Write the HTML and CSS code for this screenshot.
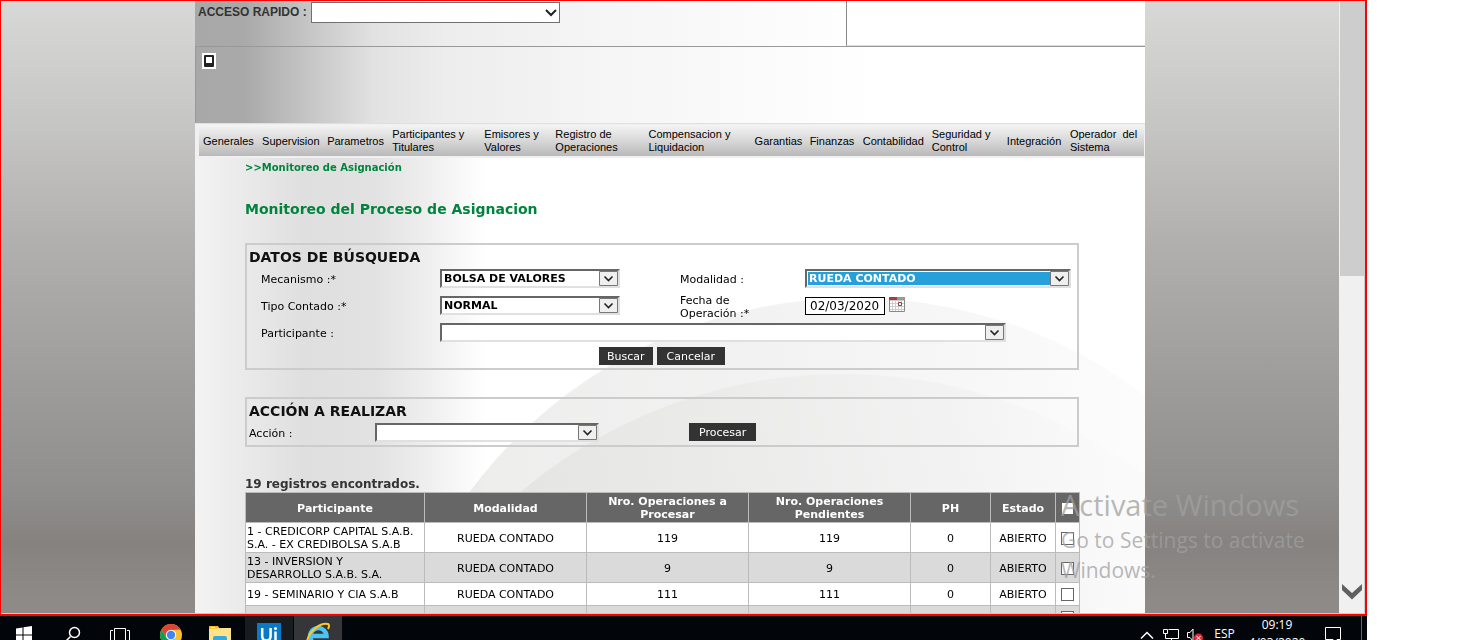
FILE: index.html
```html
<!DOCTYPE html>
<html lang="es">
<head>
<meta charset="utf-8">
<title>Monitoreo del Proceso de Asignacion</title>
<link rel="stylesheet" href="styles.css">
</head>
<body>
<div class="screen">
  <div class="frame">
    <div class="page">
      <div class="site">
        <header class="header">
          <div class="quick">
            <div class="quick-form">
              <label for="quick">ACCESO RAPIDO :</label>
              <span class="quick-box">
                <select id="quick"><option></option></select>
                <svg class="quick-arrow" viewBox="0 0 12 8"><path d="M1 1l5 5 5-5" fill="none" stroke="#222" stroke-width="2"/></svg>
              </span>
            </div>
            <div class="quick-logo"></div>
          </div>
          <div class="banner">
            <svg class="banner-icon" viewBox="0 0 14 16"><path fill="#fff" d="M0 0h14v16H0z"/><rect x="2" y="2" width="10" height="12" rx="1" fill="#222"/><path fill="#fff" d="M4 4h6v6H4z"/></svg>
          </div>
        </header>
        <nav class="nav">
          <div class="nav-bar">
            <a href="#">Generales</a>
            <a href="#">Supervision</a>
            <a href="#">Parametros</a>
            <a href="#">Participantes y<br>Titulares</a>
            <a href="#">Emisores y<br>Valores</a>
            <a href="#">Registro de<br>Operaciones</a>
            <a href="#">Compensacion y<br>Liquidacion</a>
            <a href="#">Garantias</a>
            <a href="#">Finanzas</a>
            <a href="#">Contabilidad</a>
            <a href="#">Seguridad y<br>Control</a>
            <a href="#">Integración</a>
            <a href="#">Operador&nbsp; del<br>Sistema</a>
          </div>
        </nav>
        <main class="content">
          <svg class="backdrop" viewBox="0 0 950 456">
            <defs>
              <linearGradient id="outer" gradientUnits="userSpaceOnUse" x1="250" y1="0" x2="950" y2="0">
                <stop offset="0" stop-color="#ededec"/><stop offset=".45" stop-color="#f2f2f2"/><stop offset="1" stop-color="#fcfcfc"/>
              </linearGradient>
              <linearGradient id="inner" gradientUnits="userSpaceOnUse" x1="250" y1="456" x2="920" y2="330">
                <stop offset="0" stop-color="#e2e2e1"/><stop offset=".4" stop-color="#eaeae9"/><stop offset=".8" stop-color="#f3f3f3"/><stop offset="1" stop-color="#fafafa"/>
              </linearGradient>
            </defs>
            <circle cx="660" cy="620" r="480" fill="url(#outer)"/>
            <circle cx="648" cy="716" r="500" fill="url(#inner)"/>
          </svg>
          <p class="crumb">&gt;&gt;Monitoreo de Asignación</p>
          <h1 class="title">Monitoreo del Proceso de Asignacion</h1>

          <section class="panel">
            <h2 class="panel-title">DATOS DE BÚSQUEDA</h2>
            <div class="search-grid">
              <label for="mec">Mecanismo :*</label>
              <span class="combo combo-short">
                <select id="mec"><option>BOLSA DE VALORES</option></select>
                <svg class="arrow" viewBox="0 0 19 15"><path d="M.5.5h18v14H.5z" fill="#efefef" stroke="#777"/><path d="M5.500 5.500l4 4 4-4" fill="none" stroke="#222" stroke-width="1.600"/></svg>
              </span>
              <label for="mod">Modalidad :</label>
              <span class="combo combo-mid">
                <select id="mod" class="selected"><option>RUEDA CONTADO</option></select>
                <svg class="arrow" viewBox="0 0 19 15"><path d="M.5.5h18v14H.5z" fill="#efefef" stroke="#777"/><path d="M5.500 5.500l4 4 4-4" fill="none" stroke="#222" stroke-width="1.600"/></svg>
              </span>
              <label for="tipo">Tipo Contado :*</label>
              <span class="combo combo-short">
                <select id="tipo"><option>NORMAL</option></select>
                <svg class="arrow" viewBox="0 0 19 15"><path d="M.5.5h18v14H.5z" fill="#efefef" stroke="#777"/><path d="M5.500 5.500l4 4 4-4" fill="none" stroke="#222" stroke-width="1.600"/></svg>
              </span>
              <label for="fecha">Fecha de<br>Operación :*</label>
              <span class="date">
                <input id="fecha" type="text" value="02/03/2020">
                <button type="button" class="calendar" aria-label="Calendario">
                  <svg viewBox="0 0 16 15"><path fill="#fff" d="M0 0h16v15H0z"/><path d="M1 3.500h14M1 6.500h14M1 9.500h14M1 12.500h14M3.500 3v11M6.500 3v11M9.500 3v11M12.500 3v11" stroke="#ccc"/><path fill="#a33d3d" d="M0 0h8v3H0z"/><path fill="#999" d="M8 0h8v3H8z"/><path fill="#fff" stroke="#a33d3d" d="M9.500 5.500h3v3h-3z"/><path fill="none" stroke="#888" d="M.5 3v11.500h15V3"/></svg>
                </button>
              </span>
              <label for="part">Participante :</label>
              <span class="combo combo-long">
                <select id="part"><option></option></select>
                <svg class="arrow" viewBox="0 0 19 15"><path d="M.5.5h18v14H.5z" fill="#efefef" stroke="#777"/><path d="M5.500 5.500l4 4 4-4" fill="none" stroke="#222" stroke-width="1.600"/></svg>
              </span>
            </div>
            <div class="buttons">
              <button type="button" class="btn btn-narrow">Buscar</button>
              <button type="button" class="btn">Cancelar</button>
            </div>
          </section>

          <section class="panel panel-action">
            <h2 class="panel-title">ACCIÓN A REALIZAR</h2>
            <div class="action-grid">
              <label for="accion">Acción :</label>
              <span class="combo combo-action">
                <select id="accion"><option></option></select>
                <svg class="arrow" viewBox="0 0 19 15"><path d="M.5.5h18v14H.5z" fill="#efefef" stroke="#777"/><path d="M5.500 5.500l4 4 4-4" fill="none" stroke="#222" stroke-width="1.600"/></svg>
              </span>
              <span><button type="button" class="btn">Procesar</button></span>
            </div>
          </section>

          <p class="count">19 registros encontrados.</p>
          <table class="results">
            <colgroup><col class="c-part"><col class="c-op"><col class="c-op"><col class="c-op"><col class="c-ph"><col class="c-state"><col class="c-check"></colgroup>
            <thead>
              <tr><th>Participante</th><th>Modalidad</th><th>Nro. Operaciones a Procesar</th><th>Nro. Operaciones Pendientes</th><th>PH</th><th>Estado</th><th><input type="checkbox" aria-label="Seleccionar todos"></th></tr>
            </thead>
            <tbody>
              <tr><td>1 - CREDICORP CAPITAL S.A.B. S.A. - EX CREDIBOLSA S.A.B</td><td>RUEDA CONTADO</td><td>119</td><td>119</td><td>0</td><td>ABIERTO</td><td><input type="checkbox" aria-label="Seleccionar 1"></td></tr>
              <tr><td>13 - INVERSION Y<br>DESARROLLO S.A.B. S.A.</td><td>RUEDA CONTADO</td><td>9</td><td>9</td><td>0</td><td>ABIERTO</td><td><input type="checkbox" aria-label="Seleccionar 13"></td></tr>
              <tr><td>19 - SEMINARIO Y CIA S.A.B</td><td>RUEDA CONTADO</td><td>111</td><td>111</td><td>0</td><td>ABIERTO</td><td><input type="checkbox" aria-label="Seleccionar 19"></td></tr>
              <tr><td></td><td></td><td></td><td></td><td></td><td></td><td><input type="checkbox" aria-label="Seleccionar"></td></tr>
            </tbody>
          </table>
        </main>
      </div>
    </div>
    <div class="scrollbar">
      <div class="thumb"></div>
      <svg class="scroll-down" viewBox="0 0 20 16"><path fill="#606060" d="M0 0l10 9L20 0v6L10 15.500 0 6z"/></svg>
    </div>
    <div class="watermark">
      <p class="watermark-title">Activate Windows</p>
      <p>Go to Settings to activate<br>Windows.</p>
    </div>
  </div>

  <footer class="taskbar">
    <div class="taskbar-row">
      <button type="button" class="task" aria-label="Inicio"><svg viewBox="0 0 48 36"><path fill="#fff" d="M16 12.500l6.500-1v7H16zM23.500 11.300L32 10v8.500h-8.500zM16 19.500h6.500v7l-6.500-1zM23.500 19.500H32V28l-8.500-1.200z"/></svg></button>
      <button type="button" class="task" aria-label="Buscar"><svg viewBox="0 0 48 36"><g fill="none" stroke="#fff" stroke-width="1.500"><circle cx="25.500" cy="16.500" r="5"/><path d="M21.500 20.500L16 26"/></g></svg></button>
      <button type="button" class="task" aria-label="Vista de tareas"><svg viewBox="0 0 48 36"><path fill="none" stroke="#fff" d="M16.500 12.500h11v15h-11zM15 14.500h-2.500v11H15M29 14.500h2.500v11H29"/></svg></button>
      <button type="button" class="task" aria-label="Chrome"><svg viewBox="0 0 48 36"><circle cx="24" cy="19" r="11" fill="#fbc02d"/><path fill="#db4437" d="M14.500 13.500a11 11 0 0119 0L24 14l-5 7z"/><path fill="#0f9d58" d="M14.500 13.500a11 11 0 009 16.500l5-9-9 1z"/><circle cx="24" cy="19" r="5.200" fill="#fff"/><circle cx="24" cy="19" r="4.200" fill="#4285f4"/></svg></button>
      <button type="button" class="task" aria-label="Archivos"><svg viewBox="0 0 48 36"><path fill="#f5b92a" d="M13 10h9l2 3h-11z"/><path fill="#fff3b0" d="M15 11h4v1h-4z"/><path fill="#ffe28a" d="M13 13l12-1h10v18H13z"/><path fill="#35a8dc" d="M17 22q0-2 2-2h10q2 0 2 2v10H17z"/></svg></button>
      <button type="button" class="task task-open" aria-label="UiPath"><svg viewBox="0 0 48 36"><path fill="#0a7ac8" d="M12 7h24v24H12z"/><path fill="none" stroke="#fff" stroke-width="2.500" d="M17.200 12v8q0 4.500 4.200 4.500t4.200-4.500v-8M30.500 15.500v9"/><circle cx="30.500" cy="12.500" r="1.500" fill="#fff"/></svg></button>
      <button type="button" class="task task-active" aria-label="Internet Explorer"><svg viewBox="0 0 48 36"><path fill="none" stroke="#4cc3f5" stroke-width="4.500" d="M16.500 20h16a8.200 8.200 0 10-1.500 5"/><path fill="none" stroke="#ffc91f" stroke-width="2" d="M13 25C16 14 27 6 34 8q2 1 0 5"/></svg></button>
      <div class="tray">
        <button type="button" class="tray-icon" aria-label="Mostrar iconos"><svg viewBox="0 0 24 36"><path fill="none" stroke="#fff" stroke-width="1.500" d="M9 22.500l6-6 6 6"/></svg></button>
        <button type="button" class="tray-icon" aria-label="Red"><svg viewBox="0 0 24 36"><path fill="none" stroke="#fff" d="M12.500 13.500h10v9h-13V18M15.500 23v3M12 26.500h8M7.500 13.500h4v4h-4z"/></svg></button>
        <button type="button" class="tray-icon" aria-label="Volumen"><svg viewBox="0 0 24 36"><path fill="none" stroke="#fff" d="M7.500 16.500h2.500l3-3.500v12l-3-3.500H7.500z"/><circle cx="18.500" cy="22" r="4.500" fill="#dd2c35"/><path stroke="#fff" d="M16.500 20l4 4M20.500 20l-4 4"/></svg></button>
        <button type="button" class="lang">ESP</button>
        <button type="button" class="clock">09:19<br>4/03/2020</button>
        <button type="button" class="task" aria-label="Notificaciones"><svg viewBox="0 0 48 36"><path fill="none" stroke="#fff" d="M16.500 11.500h15v12h-3.500v4l-4-4h-7.500z"/></svg></button>
      </div>
    </div>
  </footer>
</div>
</body>
</html>
```
FILE: styles.css
```css
* { box-sizing: border-box; }
body { margin: 0; background: #fff; color: #000; font: 11px/13px "DejaVu Sans", Verdana, sans-serif; }
p, h1, h2 { margin: 0; }
button { padding: 0; border: 0; background: none; font: inherit; color: inherit; }
svg { display: block; }

.screen { display: flex; flex-direction: column; height: 100vh; margin-right: 99px; overflow: hidden; }
.frame { position: relative; flex: 1; min-height: 0; display: flex; border: solid red; border-width: 1px 2px 2px 1px; overflow: hidden; }
.page {
  flex: 1; overflow: hidden; border-bottom: 1px solid #c8c8c8;
  background: linear-gradient(#d8d8d6 0, #c6c6c4 120px, #b2b0af 240px, #9f9e9c 370px, #8f8e8c 490px, #868280 540px, #8e8a88 600px);
}
.site { width: 100%; max-width: 950px; min-height: 100%; margin: 0 auto; background: #fff; }

.header { background: linear-gradient(90deg, #a8a8a8 0, #a9a9a9 50px, #c4c4c4 110px, #e2e2e2 180px, #ededed 250px, #f5f5f5 400px, #fff 680px); }
.quick { display: flex; height: 46px; border-bottom: 1px solid #999; }
.quick-form { flex: 1; display: flex; align-items: flex-start; gap: 4px; padding-left: 3px; }
.quick-form label { font: bold 12px/22px "Liberation Sans", Arial, sans-serif; color: #333; }
.quick-box { position: relative; width: 249px; margin-top: 1px; }
.quick-box select { appearance: none; display: block; width: 100%; height: 21px; border: 1px solid #707070; border-radius: 0; background: #fff; }
.quick-arrow { position: absolute; right: 3px; top: 7px; width: 12px; height: 8px; pointer-events: none; }
.quick-logo { width: 299px; border-left: 1px solid #888; border-bottom: 1px solid #ddd; background: #fff; }
.banner { height: 76px; padding: 6px; border-left: 1px solid #999; }
.banner-icon { width: 14px; height: 16px; }

.nav { padding: 1px 1px 2px 4px; border-top: 1px solid #e0e0e0; background: #f0f0f0; }
.nav-bar {
  display: grid; grid-template-columns: 59fr 65fr 65fr 92fr 71fr 93fr 106fr 55fr 53fr 69fr 75fr 63fr 74fr;
  align-items: center; height: 31px; padding: 1px 0 0 4px; background: linear-gradient(#f4f4f4, #d8d8d8 50%, #b9b9b9);
  font: 11px/13px "Liberation Sans", Arial, sans-serif;
}
.nav-bar a { color: #000; text-decoration: none; white-space: nowrap; }

.content { position: relative; z-index: 0; min-height: 456px; padding: 4px 66px 0 50px; background: linear-gradient(90deg, #f3f3f3 0, #dfdfdf 110px, #e2e2e2 180px, #eee 230px, #fff 290px); overflow: hidden; }
.backdrop { position: absolute; z-index: -1; left: 0; top: 0; width: 950px; height: 456px; mix-blend-mode: multiply; }
.crumb { font-weight: bold; font-size: 10px; line-height: 12px; color: #00843d; }
.title { margin-top: 26px; font-size: 14px; line-height: 18px; color: #00843d; }

.panel { margin-top: 25px; padding: 5px 0 3px; border: 2px solid #ccc; }
.panel-action { margin-top: 27px; padding-bottom: 0; }
.panel-title { padding-left: 2px; font-size: 14px; line-height: 15px; color: #111; }
.search-grid { display: grid; grid-template-columns: 179px 240px 125px 1fr; grid-auto-rows: 27px; align-items: center; padding-left: 14px; }
.action-grid { display: grid; grid-template-columns: 126px 314px 1fr; grid-auto-rows: 26px; align-items: center; padding-left: 2px; }
.search-grid label, .action-grid label { padding-top: 2px; }

.combo { position: relative; height: 19px; border: 2px solid; border-color: #666 #e0e0e0 #e0e0e0 #666; }
.combo select { appearance: none; display: block; width: 100%; height: 15px; padding: 0 20px 0 1px; border: 1px solid #fff; border-radius: 0; background: #fff; color: #000; font: bold 11px/13px "DejaVu Sans", Verdana, sans-serif; }
.combo .selected { background: #26a0da; color: #fff; }
.arrow { position: absolute; right: 0; top: 0; width: 19px; height: 15px; pointer-events: none; }
.combo-short { width: 180px; }
.combo-mid { width: 266px; }
.combo-long { width: 566px; grid-column: span 3; }
.combo-action { width: 224px; }
.date { display: flex; align-items: flex-start; gap: 4px; }
.date input { width: 80px; height: 18px; padding: 0 0 0 4px; border: 1px solid #000; background: #fff; font: 12px/16px "DejaVu Sans", Verdana, sans-serif; }
.calendar { width: 16px; height: 15px; }
.calendar svg { width: 16px; height: 15px; }

.buttons { display: flex; justify-content: center; gap: 4px; padding-top: 1px; }
.btn { height: 18px; padding: 0 10px; background: #333; color: #fff; }
.btn-narrow { padding: 0 8px; }

.count { margin-top: 29px; font-size: 12px; font-weight: bold; line-height: 16px; color: #333; }
.results { width: 100%; table-layout: fixed; border-collapse: collapse; background: #fff; }
.results th, .results td { height: 23px; padding: 2px 1px 1px; border: 1px solid #bbb; text-align: center; }
.results th { height: 30px; background: #666; color: #fff; }
.results td:first-child { text-align: left; }
.results tbody tr:nth-child(even) { background: #dadada; }
.results input { appearance: none; display: block; width: 13px; height: 13px; margin: 0 auto; border: 1px solid #666; background: #fff; }
.c-part { width: 179px; }
.c-op { width: 162px; }
.c-ph { width: 80px; }
.c-state { width: 65px; }
.c-check { width: 24px; }

.scrollbar { display: flex; flex-direction: column; justify-content: space-between; width: 26px; border: solid #ccc; border-width: 0 1px 1px 0; background: #f0f0f0; }
.thumb { height: 275px; margin-left: 1px; background: #cdcdcd; }
.scroll-down { width: 20px; height: 16px; margin: 0 0 13px 3px; }

.watermark { position: absolute; right: 60px; bottom: 29px; width: 244px; color: rgba(160, 160, 160, .75); font: 21px/30px "Open Sans", "Noto Sans", sans-serif; white-space: nowrap; }
.watermark-title { font-size: 29px; line-height: 40px; }

.taskbar { flex: 0 0 24px; overflow: hidden; background: #02050a; color: #fff; font: 12px/18px "Open Sans", "Noto Sans", sans-serif; }
.taskbar-row { display: flex; gap: 1px; height: 36px; padding-right: 5px; }
.task { width: 48px; height: 36px; }
.task svg, .tray-icon svg { width: 100%; height: 36px; }
.task-open { background: #181c20; }
.task-active { background: #35363a; }
.tray { display: flex; margin-left: auto; padding-right: 4px; border-right: 1px solid #666; }
.tray-icon { width: 24px; height: 36px; }
.lang { width: 41px; line-height: 12px; }
.clock { width: 64px; }
```
